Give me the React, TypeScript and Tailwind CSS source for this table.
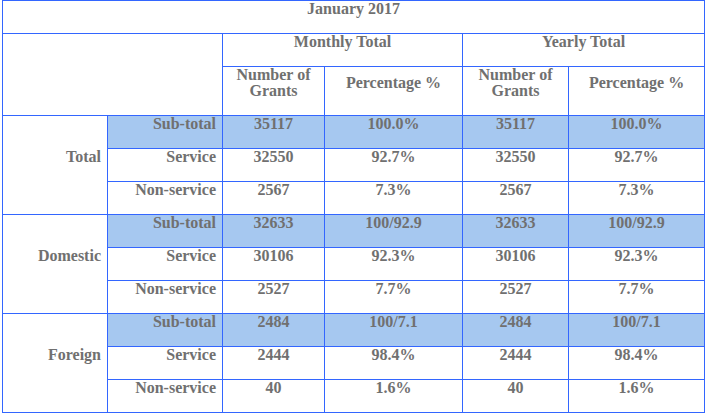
export default function App() {
  const groups = [
    {
      label: "Total",
      rows: [
        ["Sub-total", "35117", "100.0%", "35117", "100.0%"],
        ["Service", "32550", "92.7%", "32550", "92.7%"],
        ["Non-service", "2567", "7.3%", "2567", "7.3%"],
      ],
    },
    {
      label: "Domestic",
      rows: [
        ["Sub-total", "32633", "100/92.9", "32633", "100/92.9"],
        ["Service", "30106", "92.3%", "30106", "92.3%"],
        ["Non-service", "2527", "7.7%", "2527", "7.7%"],
      ],
    },
    {
      label: "Foreign",
      rows: [
        ["Sub-total", "2484", "100/7.1", "2484", "100/7.1"],
        ["Service", "2444", "98.4%", "2444", "98.4%"],
        ["Non-service", "40", "1.6%", "40", "1.6%"],
      ],
    },
  ];

  const cell = "border border-[#3366ff] pt-0 pb-4 px-[6px] align-middle";

  return (
    <div className="bg-white w-[707px] h-[414px] pl-[2px] [font-family:'Liberation_Serif','Times_New_Roman',serif] font-bold text-[16px] leading-[16px] text-[#707070]">
      <table className="border-collapse table-fixed w-[702px]">
        <colgroup>
          <col className="w-[105px]" />
          <col className="w-[115px]" />
          <col className="w-[102px]" />
          <col className="w-[138px]" />
          <col className="w-[106px]" />
          <col className="w-[136px]" />
        </colgroup>
        <thead>
          <tr>
            <th colSpan={6} className={`${cell} text-center font-bold`}>
              January 2017
            </th>
          </tr>
          <tr>
            <th colSpan={2} rowSpan={2} className={cell}></th>
            <th colSpan={2} className={`${cell} text-center font-bold`}>
              Monthly Total
            </th>
            <th colSpan={2} className={`${cell} text-center font-bold`}>
              Yearly Total
            </th>
          </tr>
          <tr>
            <th className={`${cell} text-center font-bold`}>
              Number of
              <br />
              Grants
            </th>
            <th className={`${cell} text-center font-bold`}>Percentage %</th>
            <th className={`${cell} text-center font-bold`}>
              Number of
              <br />
              Grants
            </th>
            <th className={`${cell} text-center font-bold`}>Percentage %</th>
          </tr>
        </thead>
        <tbody>
          {groups.map((g) =>
            g.rows.map((r, i) => {
              const sub = i === 0;
              const bg = sub ? "bg-[#a6c8f0]" : "";
              return (
                <tr key={g.label + r[0]}>
                  {i === 0 && (
                    <td rowSpan={3} className={`${cell} text-right`}>
                      {g.label}
                    </td>
                  )}
                  <td className={`${cell} ${bg} text-right`}>{r[0]}</td>
                  <td className={`${cell} ${bg} text-center`}>{r[1]}</td>
                  <td className={`${cell} ${bg} text-center`}>{r[2]}</td>
                  <td className={`${cell} ${bg} text-center`}>{r[3]}</td>
                  <td className={`${cell} ${bg} text-center`}>{r[4]}</td>
                </tr>
              );
            })
          )}
        </tbody>
      </table>
    </div>
  );
}
